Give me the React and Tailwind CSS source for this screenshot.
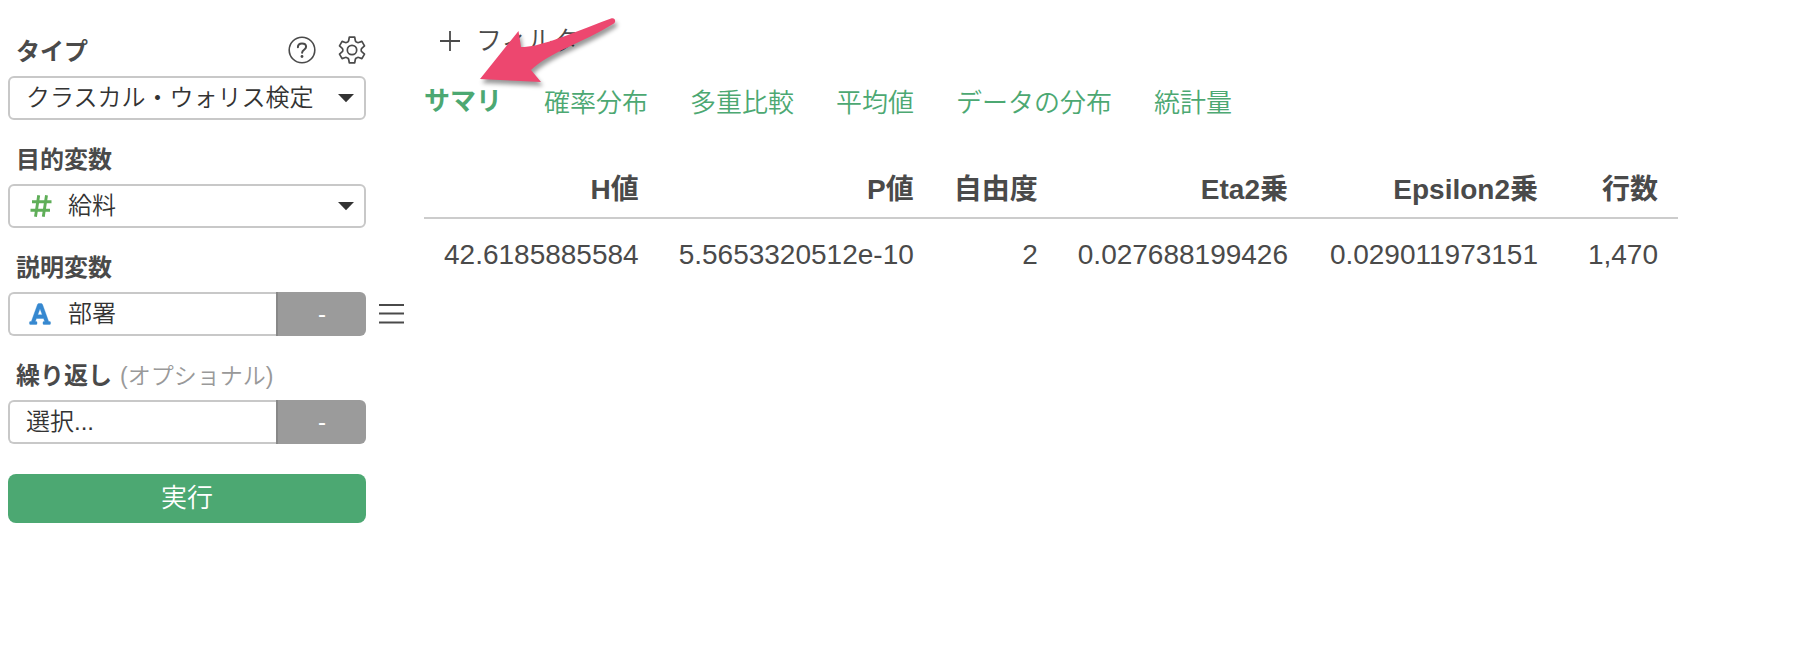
import { FaFont } from 'react-icons/fa';

const tabs = ['サマリ', '確率分布', '多重比較', '平均値', 'データの分布', '統計量'];

const columns = [
  { name: 'H値', value: '42.6185885584', width: '' },
  { name: 'P値', value: '5.5653320512e-10', width: '' },
  { name: '自由度', value: '2', width: '' },
  { name: 'Eta2乗', value: '0.027688199426', width: 'min-w-[250px]' },
  { name: 'Epsilon2乗', value: '0.029011973151', width: 'min-w-[250px]' },
  { name: '行数', value: '1,470', width: 'min-w-[120px]' },
];

function HelpIcon() {
  return (
    <svg width="28" height="28" viewBox="0 0 28 28" fill="none" stroke="#4a4a4a" strokeWidth="1.6" strokeLinecap="round">
      <circle cx="14" cy="14" r="12.8" />
      <path d="M9.9 11.2c0-2.3 1.8-3.8 4.1-3.8s4.1 1.4 4.1 3.4c0 3-4 2.900-4 6" strokeWidth="2" />
      <circle cx="14" cy="20.500" r="1.400" fill="#4a4a4a" stroke="none" />
    </svg>
  );
}

function GearIcon() {
  return (
    <svg width="28" height="28" viewBox="0 0 28 28" fill="none" stroke="#4a4a4a" strokeWidth="1.7" strokeLinejoin="round">
      <path d="M11.300 1.200h5.400l.6 3.300q.2 1 1.100 1.500l.6.300q.8.500 1.700.200l3.200-1.100 2.600 4.500-2.500 2.200q-.8.700-.8 1.500v.8q0 .8.800 1.500l2.500 2.200-2.600 4.500-3.200-1.100q-.9-.3-1.700.2l-.6.3q-.9.500-1.100 1.500l-.6 3.300h-5.400l-.6-3.300q-.2-1-1.100-1.500l-.6-.3q-.8-.5-1.700-.2l-3.200 1.100-2.600-4.500 2.500-2.200q.8-.7.8-1.500v-.8q0-.8-.8-1.500l-2.500-2.200 2.600-4.500 3.200 1.100q.9.300 1.700-.2l.6-.3q.9-.5 1.100-1.500z" />
      <circle cx="14" cy="14" r="4.700" />
    </svg>
  );
}

function NumberIcon() {
  return (
    <svg
      width="22"
      height="22"
      viewBox="0 0 22 22"
      stroke="#5fae58"
      strokeWidth="2.9"
      className="pointer-events-none absolute left-[22px] top-[11px]"
    >
      <path d="M2 6.700h19.500M0.500 15.300H20M8.700 0.300L5.500 21.700M16.500 0.300L13.300 21.700" />
    </svg>
  );
}

function Caret() {
  return (
    <svg width="16" height="9" viewBox="0 0 16 9" className="pointer-events-none absolute right-3 top-1/2 -translate-y-1/2">
      <path d="M0 0.500h16L8 8.800z" fill="#333" />
    </svg>
  );
}

function Field({ id, label, optional, actions, children }) {
  return (
    <div className="mb-[30px]">
      <div className="mb-3.5 flex h-5 items-center justify-between pl-2">
        <label htmlFor={id} className="font-bold text-[#4a4a4a]">
          {label}
          {optional && <span className="ml-2 text-[23px] font-[350] text-[#999]">{optional}</span>}
        </label>
        {actions}
      </div>
      {children}
    </div>
  );
}

const selectBase = 'h-11 min-w-0 flex-1 appearance-none border-2 border-[#c8c8c8] bg-white text-[#333] font-[350]';

export default function App() {
  return (
    <div className="flex min-h-screen bg-white font-['Liberation_Sans','Noto_Sans_CJK_JP',sans-serif] text-2xl" lang="ja">
      {/* Settings */}
      <aside className="w-[366px] shrink-0 pl-2 pt-[42px]">
        <Field
          id="type"
          label="タイプ"
          actions={
            <div className="flex gap-[22px] pb-1">
              <button type="button" aria-label="ヘルプ"><HelpIcon /></button>
              <button type="button" aria-label="設定"><GearIcon /></button>
            </div>
          }
        >
          <div className="relative flex">
            <select id="type" className={`${selectBase} rounded-md pl-4`}>
              <option>クラスカル・ウォリス検定</option>
            </select>
            <Caret />
          </div>
        </Field>

        <Field id="target" label="目的変数">
          <div className="relative flex">
            <select id="target" className={`${selectBase} rounded-md pl-[58px]`}>
              <option>給料</option>
            </select>
            <NumberIcon />
            <Caret />
          </div>
        </Field>

        <Field id="explanatory" label="説明変数">
          <div className="relative flex">
            <select id="explanatory" className={`${selectBase} rounded-l-md border-r-0 pl-[58px]`}>
              <option>部署</option>
            </select>
            <FaFont className="pointer-events-none absolute left-5 top-2.5 size-6 stroke-[8px] text-[#3688d0]" />
            <button type="button" className="w-[90px] rounded-r-md border-l-2 border-[#888] bg-[#9b9b9b] text-white">-</button>
            <button type="button" aria-label="並び替え" className="absolute left-full top-2.5 ml-3">
              <svg width="26" height="24" viewBox="0 0 26 24" stroke="#4a4a4a" strokeWidth="1.800">
                <path d="M1 3h25M1 11.500h25M1 20.500h25" />
              </svg>
            </button>
          </div>
        </Field>

        <Field id="repeat" label="繰り返し" optional="(オプショナル)">
          <div className="flex">
            <select id="repeat" className={`${selectBase} rounded-l-md border-r-0 pl-4`}>
              <option>選択...</option>
            </select>
            <button type="button" className="w-[90px] rounded-r-md border-l-2 border-[#888] bg-[#9b9b9b] text-white">-</button>
          </div>
        </Field>

        <button type="button" className="h-[49px] w-full rounded-lg bg-[#4ca872] text-[26px] font-[350] text-white">
          実行
        </button>
      </aside>

      {/* Results */}
      <main className="relative min-w-0 flex-1 pl-[58px] pt-[21px]">
        <button type="button" className="ml-4 flex h-10 items-center gap-4 text-[26px] font-[350] text-[#4a4a4a]">
          <svg width="20" height="20" viewBox="0 0 20 20" stroke="#4a4a4a" strokeWidth="1.800">
            <path d="M0 10h20M10 0v20" />
          </svg>
          フィルタ
        </button>

        <nav className="mt-[22px] flex h-10 items-center gap-[42px] text-[26px] leading-10 text-[#4ca872]">
          {tabs.map((tab, i) => (
            <a key={tab} href="#" className={i === 0 ? 'pb-1 font-bold' : 'font-[350]'}>
              {tab}
            </a>
          ))}
        </nav>

        <table className="mt-[39px] text-right text-[28px] leading-10 text-[#4a4a4a]">
          <thead>
            <tr className="border-b-2 border-[#ccc]">
              {columns.map((col) => (
                <th key={col.name} className={`px-5 pb-[7px] pt-2 font-bold ${col.width}`}>{col.name}</th>
              ))}
            </tr>
          </thead>
          <tbody>
            <tr>
              {columns.map((col) => (
                <td key={col.name} className="px-5 pt-4">{col.value}</td>
              ))}
            </tr>
          </tbody>
        </table>

        {/* Arrow pointing at the active tab */}
        <svg
          width="150"
          height="90"
          viewBox="0 0 150 90"
          className="pointer-events-none absolute left-[108px] top-3 drop-shadow-[2px_4px_2px_rgba(0,0,0,0.4)]"
        >
          <path
            d="M6 67L44.500 19L47 35C66 35 88 25 137 6.500C141 5 143 10 139 12C110 30 74 41 57 58L67 70z"
            fill="#ed476f"
          />
        </svg>
      </main>
    </div>
  );
}
